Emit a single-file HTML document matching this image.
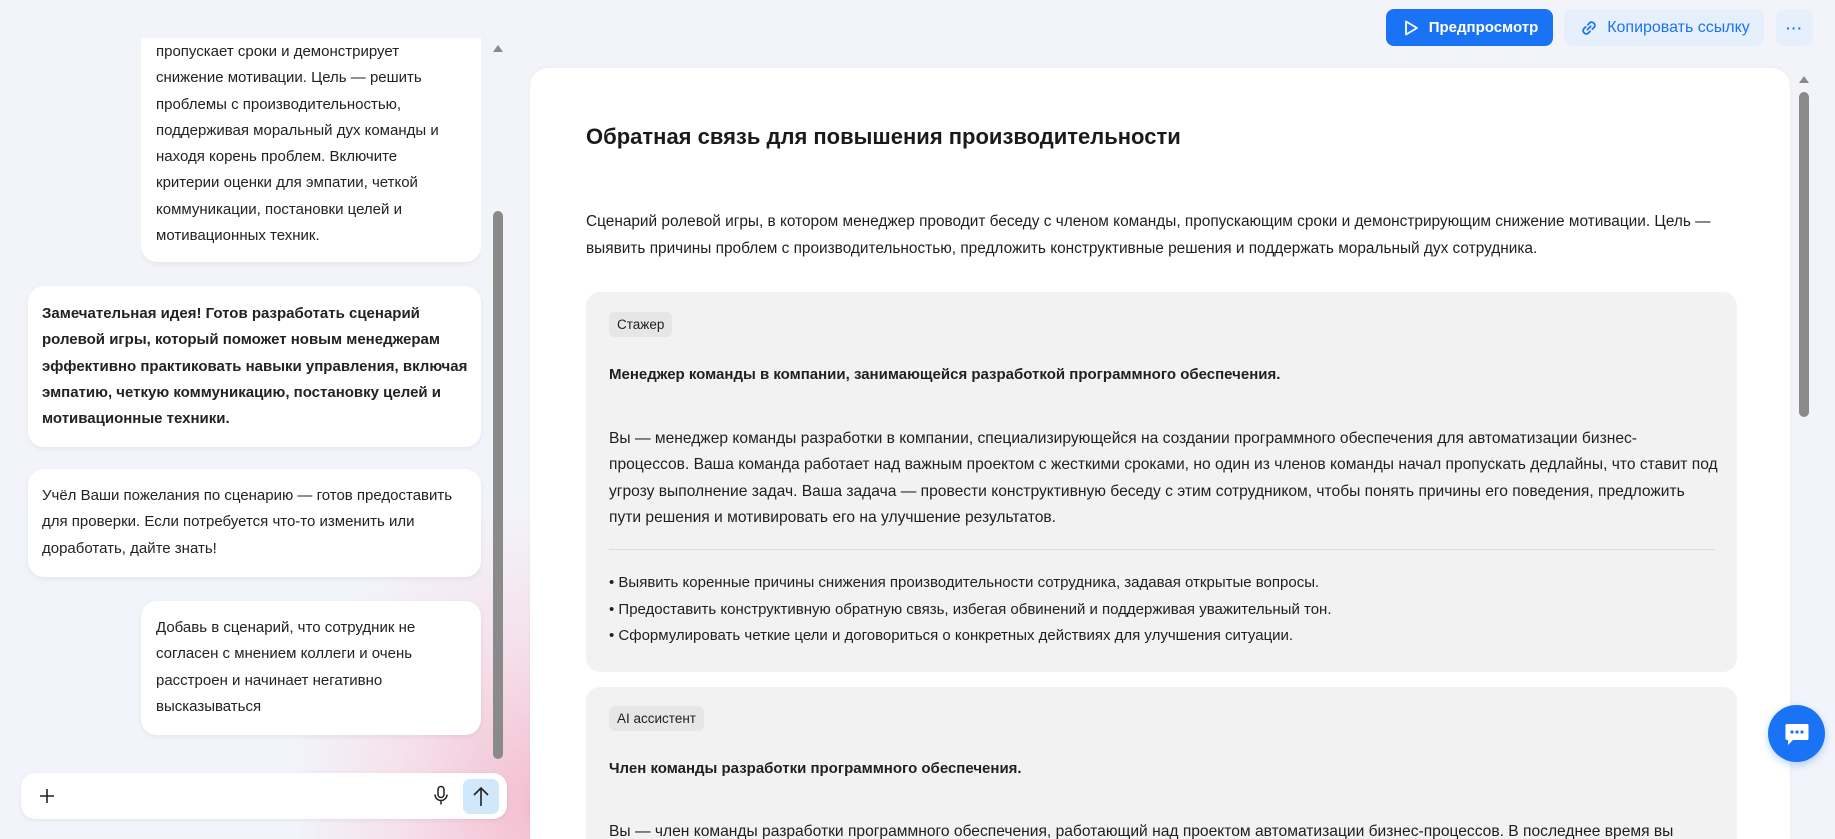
<!DOCTYPE html>
<html><head><meta charset="utf-8">
<style>
*{box-sizing:border-box;margin:0;padding:0}
html,body{width:1835px;height:839px;overflow:hidden}
body{font-family:"Liberation Sans","Noto Sans CJK SC",sans-serif;color:#1f1f1f;background:linear-gradient(180deg,#f3f4fa 0%,#f2f4fb 100%);position:relative}
.pink{position:absolute;left:300px;top:520px;width:260px;height:319px;background:radial-gradient(ellipse at 90% 90%,rgba(244,180,200,.85) 0%,rgba(248,205,218,.5) 40%,rgba(255,255,255,0) 75%)}
.abs{position:absolute}
.bub{position:absolute;background:#fff;border-radius:16px;box-shadow:0 2px 6px rgba(0,0,0,.06);font-size:15px;line-height:26.3px;color:#222}
.bub p{white-space:nowrap}
.lscroll{position:absolute;left:493px;top:42px;width:10px;height:700px}
.btn{position:absolute;border-radius:8px;font-size:15px;display:flex;align-items:center;justify-content:center;font-weight:bold}
.panel{position:absolute;left:530px;top:68px;width:1260px;height:771px;background:#fff;border-radius:18px 18px 0 0;box-shadow:0 0 4px rgba(0,0,0,.04);overflow:hidden}
.card{position:absolute;left:56px;width:1151px;background:#f2f2f2;border-radius:14px;font-size:15.6px}
.tag{position:absolute;left:23px;height:25px;line-height:25px;padding:0 8px;background:#e6e6e6;border-radius:6px;font-size:13.5px}
.t{position:absolute;left:23px;white-space:nowrap}
</style></head><body>
<div class="pink"></div>

<div class="bub" style="left:141px;top:20px;width:340px;height:242px;border-top-left-radius:0;border-top-right-radius:0;clip-path:inset(18px 0 -10px 0)">
 <div style="position:absolute;left:15px;top:19px">
 <p>пропускает сроки и демонстрирует</p>
 <p>снижение мотивации. Цель — решить</p>
 <p>проблемы с производительностью,</p>
 <p>поддерживая моральный дух команды и</p>
 <p>находя корень проблем. Включите</p>
 <p>критерии оценки для эмпатии, четкой</p>
 <p>коммуникации, постановки целей и</p>
 <p>мотивационных техник.</p></div>
</div>
<div class="bub" style="left:28px;top:286px;width:453px;height:161px;font-weight:bold">
 <div style="position:absolute;left:14px;top:15px">
 <p>Замечательная идея! Готов разработать сценарий</p>
 <p>ролевой игры, который поможет новым менеджерам</p>
 <p>эффективно практиковать навыки управления, включая</p>
 <p>эмпатию, четкую коммуникацию, постановку целей и</p>
 <p>мотивационные техники.</p></div>
</div>
<div class="bub" style="left:28px;top:469px;width:453px;height:108px">
 <div style="position:absolute;left:14px;top:14px">
 <p>Учёл Ваши пожелания по сценарию — готов предоставить</p>
 <p>для проверки. Если потребуется что-то изменить или</p>
 <p>доработать, дайте знать!</p></div>
</div>
<div class="bub" style="left:141px;top:601px;width:340px;height:134px">
 <div style="position:absolute;left:15px;top:14px">
 <p>Добавь в сценарий, что сотрудник не</p>
 <p>согласен с мнением коллеги и очень</p>
 <p>расстроен и начинает негативно</p>
 <p>высказываться</p></div>
</div>
<div class="lscroll">
 <div class="abs" style="left:0;top:3px;width:0;height:0;border-left:5px solid transparent;border-right:5px solid transparent;border-bottom:7px solid #8a8a8a"></div>
 <div class="abs" style="left:0;top:169px;width:10px;height:548px;background:#8a8a8a;border-radius:5px"></div>
 <div class="abs" style="left:0;top:687px;width:0;height:0;border-left:5px solid transparent;border-right:5px solid transparent;border-top:7px solid #8a8a8a"></div>
</div>
<div class="abs" style="left:21px;top:773px;width:486px;height:46px;background:#fff;border-radius:14px;box-shadow:0 1px 4px rgba(0,0,0,.08)">
 <svg class="abs" style="left:17px;top:14px" width="18" height="18" viewBox="0 0 18 18"><path d="M9 2v14M2 9h14" stroke="#222" stroke-width="1.6"/></svg>
 <svg class="abs" style="left:412px;top:12px" width="16" height="22" viewBox="0 0 16 22"><rect x="5" y="1.5" width="6" height="11" rx="3" fill="none" stroke="#222" stroke-width="1.5"/><path d="M2 9.5a6 6 0 0 0 12 0M8 15.5v4" fill="none" stroke="#222" stroke-width="1.5"/></svg>
 <div class="abs" style="left:442px;top:6px;width:36px;height:35px;background:#cfe8fb;border-radius:7px">
  <svg class="abs" style="left:8px;top:6px" width="20" height="23" viewBox="0 0 20 23"><path d="M10 21V3M3 10l7-7 7 7" fill="none" stroke="#222" stroke-width="1.6"/></svg>
 </div>
</div>

<div class="btn" style="left:1386px;top:9px;width:167px;height:37px;background:#1a73f5;color:#fff">
 <svg width="20" height="20" viewBox="0 0 20 20" style="margin-right:8px"><path d="M5 3.5v13l11-6.5z" fill="none" stroke="#fff" stroke-width="1.8" stroke-linejoin="round"/></svg>Предпросмотр</div>
<div class="btn" style="left:1564px;top:9px;width:200px;height:37px;background:#e6f0fd;color:#1a73f5;font-weight:normal;font-size:16px">
 <svg width="22" height="22" viewBox="0 0 20 20" style="margin-right:7px"><path d="M8.5 11.5l3-3M7 9l-2 2a3 3 0 0 0 4 4l2-2M13 11l2-2a3 3 0 0 0-4-4l-2 2" fill="none" stroke="#1a73f5" stroke-width="1.6" stroke-linecap="round"/></svg>Копировать ссылку</div>
<div class="btn" style="left:1776px;top:9px;width:37px;height:37px;background:#e6f0fd;color:#1a73f5;font-size:14px;letter-spacing:1px">···</div>

<div class="panel">
 <div class="abs" style="left:56px;top:56px;font-size:22px;font-weight:bold;white-space:nowrap;color:#1a1a1a">Обратная связь для повышения производительности</div>
 <div class="abs" style="left:56px;top:140px;font-size:15.4px;line-height:27px;white-space:nowrap">Сценарий ролевой игры, в котором менеджер проводит беседу с членом команды, пропускающим сроки и демонстрирующим снижение мотивации. Цель —<br>выявить причины проблем с производительностью, предложить конструктивные решения и поддержать моральный дух сотрудника.</div>
 <div class="card" style="top:224px;height:380px">
  <div class="tag" style="top:20px">Стажер</div>
  <div class="t" style="top:74px;font-weight:bold;font-size:15px">Менеджер команды в компании, занимающейся разработкой программного обеспечения.</div>
  <div class="t" style="top:134px;line-height:26.4px">Вы — менеджер команды разработки в компании, специализирующейся на создании программного обеспечения для автоматизации бизнес-<br>процессов. Ваша команда работает над важным проектом с жесткими сроками, но один из членов команды начал пропускать дедлайны, что ставит под<br>угрозу выполнение задач. Ваша задача — провести конструктивную беседу с этим сотрудником, чтобы понять причины его поведения, предложить<br>пути решения и мотивировать его на улучшение результатов.</div>
  <div class="abs" style="left:23px;top:257px;width:1106px;height:1px;background:#dcdcdc"></div>
  <div class="t" style="top:278px;line-height:26.5px;font-size:15px">• Выявить коренные причины снижения производительности сотрудника, задавая открытые вопросы.<br>• Предоставить конструктивную обратную связь, избегая обвинений и поддерживая уважительный тон.<br>• Сформулировать четкие цели и договориться о конкретных действиях для улучшения ситуации.</div>
 </div>
 <div class="card" style="top:619px;height:300px">
  <div class="tag" style="top:19px">AI ассистент</div>
  <div class="t" style="top:73px;font-weight:bold;font-size:15px">Член команды разработки программного обеспечения.</div>
  <div class="t" style="top:136px">Вы — член команды разработки программного обеспечения, работающий над проектом автоматизации бизнес-процессов. В последнее время вы</div>
 </div>
</div>
<div class="abs" style="left:1799px;top:76px;width:0;height:0;border-left:5px solid transparent;border-right:5px solid transparent;border-bottom:7px solid #8a8a8a"></div>
<div class="abs" style="left:1799px;top:92px;width:10px;height:325px;background:#8a8a8a;border-radius:5px"></div>
<div class="abs" style="left:1768px;top:705px;width:57px;height:57px;border-radius:50%;background:#1a73f5;box-shadow:0 3px 8px rgba(26,115,245,.3)">
 <svg class="abs" style="left:15px;top:15px" width="28" height="28" viewBox="0 0 28 28"><path d="M4 4h20a1.5 1.5 0 0 1 1.5 1.5v13a1.5 1.5 0 0 1-1.5 1.5H10l-5 5v-5H4a1.5 1.5 0 0 1-1.5-1.5v-13A1.5 1.5 0 0 1 4 4z" fill="#fff"/><circle cx="9" cy="12" r="1.6" fill="#1a73f5"/><circle cx="14" cy="12" r="1.6" fill="#1a73f5"/><circle cx="19" cy="12" r="1.6" fill="#1a73f5"/></svg>
</div>
</body></html>
